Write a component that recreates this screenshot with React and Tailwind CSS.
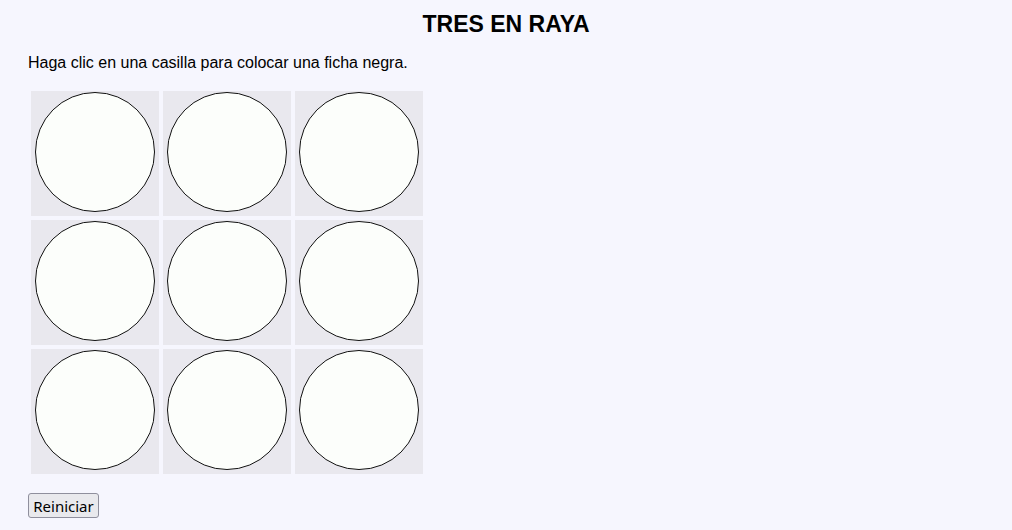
import React from 'react';

const cells = Array.from({ length: 9 }, (_, i) => i);

const Cell = () => (
  <div className="h-[125px] w-[128px] bg-[#e9e8ee] px-[4px] pt-[1px]">
    <svg width="120" height="120" viewBox="0 0 120 120" className="block">
      <circle cx="60" cy="60" r="59.5" fill="#fcfefb" stroke="#111" strokeWidth="1" />
    </svg>
  </div>
);

export default function App() {
  return (
    <div className="min-h-screen bg-[#f6f6fe] px-[28px] font-['Liberation_Sans',Arial,sans-serif] text-black">
      <h1 className="pt-[11px] text-center text-[23px] font-bold leading-[26px]">TRES EN RAYA</h1>
      <p className="mt-[17px] text-[16px] leading-[18px]">
        Haga clic en una casilla para colocar una ficha negra.
      </p>
      <div className="ml-[3px] mt-[19px] grid w-max grid-cols-[repeat(3,128px)] gap-[4px]">
        {cells.map((i) => (
          <Cell key={i} />
        ))}
      </div>
      <button
        type="button"
        className="mt-[19px] h-[25px] w-[71px] rounded-[3px] border border-[#8f8f9d] bg-[#e9e9ed] font-['Noto_Sans',sans-serif] text-[15px] leading-[20px] text-black"
      >
        Reiniciar
      </button>
    </div>
  );
}
